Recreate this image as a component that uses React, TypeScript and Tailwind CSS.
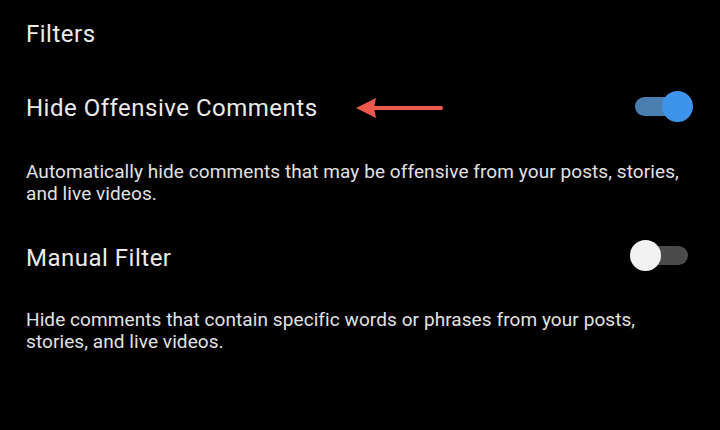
import React, { useState } from "react";

function Toggle({ on, onChange }: { on: boolean; onChange: () => void }) {
  return (
    <button
      type="button"
      onClick={onChange}
      className="relative flex h-[32px] w-[60px] shrink-0 items-center"
    >
      <span
        className={`absolute right-[2px] h-[19px] w-[56px] rounded-full ${
          on ? "bg-[#4a7eb0]" : "bg-[#4b4b4b]"
        }`}
      />
      <span
        className={`absolute h-[31px] w-[31px] rounded-full ${
          on ? "right-0 bg-[#3d94ea]" : "left-0 bg-[#f2f2f2]"
        }`}
      />
    </button>
  );
}

function Arrow() {
  return (
    <svg width="90" height="24" viewBox="0 0 90 24" className="ml-[37px]">
      <path d="M18 12 H86" stroke="#ec5a4c" strokeWidth="4" strokeLinecap="round" />
      <path d="M1 12 L21 2 L19 12 L21 22 Z" fill="#ec5a4c" />
    </svg>
  );
}

export default function App() {
  const [hideOffensive, setHideOffensive] = useState(true);
  const [manual, setManual] = useState(false);

  return (
    <div
      className="h-[430px] w-[720px] overflow-hidden bg-black pl-[26px] pr-[27px] text-[#ebebeb]"
      style={{ fontFamily: "Roboto, 'Noto Sans', sans-serif" }}
    >
      <div className="pt-[18px] text-[24px] leading-[32px] tracking-[0.5px]">Filters</div>

      <div className="mt-[42px] flex items-center justify-between">
        <div className="flex items-center">
          <span className="text-[24px] leading-[32px] tracking-[0.5px]">Hide Offensive Comments</span>
          <Arrow />
        </div>
        <div className="-mt-[4px]">
          <Toggle on={hideOffensive} onChange={() => setHideOffensive((v) => !v)} />
        </div>
      </div>

      <p className="mt-[37px] text-[19px] leading-[22px] tracking-[0.08px] text-[#e2e2e2]">
        Automatically hide comments that may be offensive from your posts, stories,
        <br />
        and live videos.
      </p>

      <div className="mt-[37px] flex items-center justify-between">
        <span className="text-[24px] leading-[32px] tracking-[0.5px]">Manual Filter</span>
        <div className="-mt-[6px] mr-[3px]">
          <Toggle on={manual} onChange={() => setManual((v) => !v)} />
        </div>
      </div>

      <p className="mt-[35px] text-[19px] leading-[22px] tracking-[0.08px] text-[#e2e2e2]">
        Hide comments that contain specific words or phrases from your posts,
        <br />
        stories, and live videos.
      </p>
    </div>
  );
}
